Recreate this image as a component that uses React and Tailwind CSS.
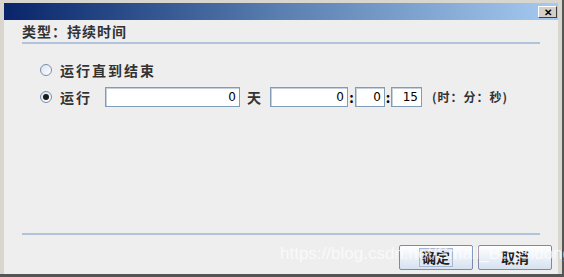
import React from 'react';

const cjk = { fontFamily: '"Noto Sans CJK SC", "Liberation Sans", sans-serif' };

const Field = ({ value, className }) => (
  <div
    className={`h-[20px] bg-white border border-[#7f9db9] shadow-[inset_1px_1px_0_#c4d0dc] flex items-center justify-end pr-[3px] text-[12px] font-normal tracking-normal text-black ${className}`}
    style={{ fontFamily: '"DejaVu Sans", sans-serif' }}
  >
    {value}
  </div>
);

const Radio = ({ checked }) => (
  <div className="w-[12px] h-[12px] rounded-full border border-[#7a8ea8] bg-gradient-to-br from-[#d8e2ee] to-white flex items-center justify-center">
    {checked && <div className="w-[6px] h-[6px] rounded-full bg-[#1a1a1a]" />}
  </div>
);

const Btn = ({ label, focused }) => (
  <div className="w-[74px] h-[25px] border border-[#7a8aa8] rounded-[2px] bg-gradient-to-b from-white to-[#d6e2f0] flex items-center justify-center">
    <span
      className={`px-[2px] text-[14px] leading-[17px] font-bold text-[#222] ${focused ? 'border border-[#a8b8d0] bg-[#dfe8f4]' : ''}`}
      style={cjk}
    >
      {label}
    </span>
  </div>
);

export default function App() {
  return (
    <div className="w-[564px] h-[277px] bg-[#d9d6cf] pt-[3px] pl-[4px] pr-[4px] border-r-2 border-b-[3px] border-[#555555] flex flex-col">
      <div className="h-[17px] bg-gradient-to-r from-[#0a246a] via-[#5a7fb0] to-[#a6caf0] flex items-center justify-end pr-[1px]">
        <div className="w-[19px] h-[12px] bg-[#d4d0c8] border border-t-white border-l-white border-r-[#404040] border-b-[#404040] flex items-center justify-center text-[10px] font-bold leading-none text-black">
          ✕
        </div>
      </div>
      <div className="flex-1 bg-[#eeeeee] flex flex-col px-[18px]" style={cjk}>
        <div className="pt-[3px] text-[14px] leading-[16px] tracking-[1px] font-bold text-[#333]">类型：持续时间</div>
        <div className="mt-[3px] h-[2px] bg-[#b0c2dc]" />

        <div className="mt-[17px] pl-[18px] flex items-center h-[18px]">
          <Radio />
          <span className="ml-[8px] text-[14px] tracking-[2px] font-bold text-[#333]">运行直到结束</span>
        </div>

        <div className="mt-[8px] pl-[18px] flex items-center h-[20px] text-[14px] font-bold text-[#333]">
          <Radio checked />
          <span className="ml-[8px] w-[45px] tracking-[2px]">运行</span>
          <Field value="0" className="w-[135px]" />
          <span className="ml-[7px] w-[23px]">天</span>
          <Field value="0" className="w-[78px]" />
          <span className="w-[7px] text-center text-black">:</span>
          <Field value="0" className="w-[30px]" />
          <span className="w-[6px] text-center text-black">:</span>
          <Field value="15" className="w-[31px]" />
          <span className="ml-[10px] text-[12px] tracking-[1px]">(时：分：秒)</span>
        </div>

        <div className="flex-1" />
        <div className="h-[2px] bg-[#b0c2dc]" />
        <div className="relative h-[39px] pt-[10px] flex items-start justify-end gap-[5px] -mr-[12px]">
          <Btn label="确定" focused />
          <Btn label="取消" />
          <span
            className="absolute z-10 left-[258px] top-[6px] whitespace-nowrap text-[17px] text-white/70 pointer-events-none"
            style={{ fontFamily: '"Liberation Sans", sans-serif' }}
          >
            https://blog.csdn.net/Small_Bu_Sidong
          </span>
        </div>
      </div>
    </div>
  );
}
